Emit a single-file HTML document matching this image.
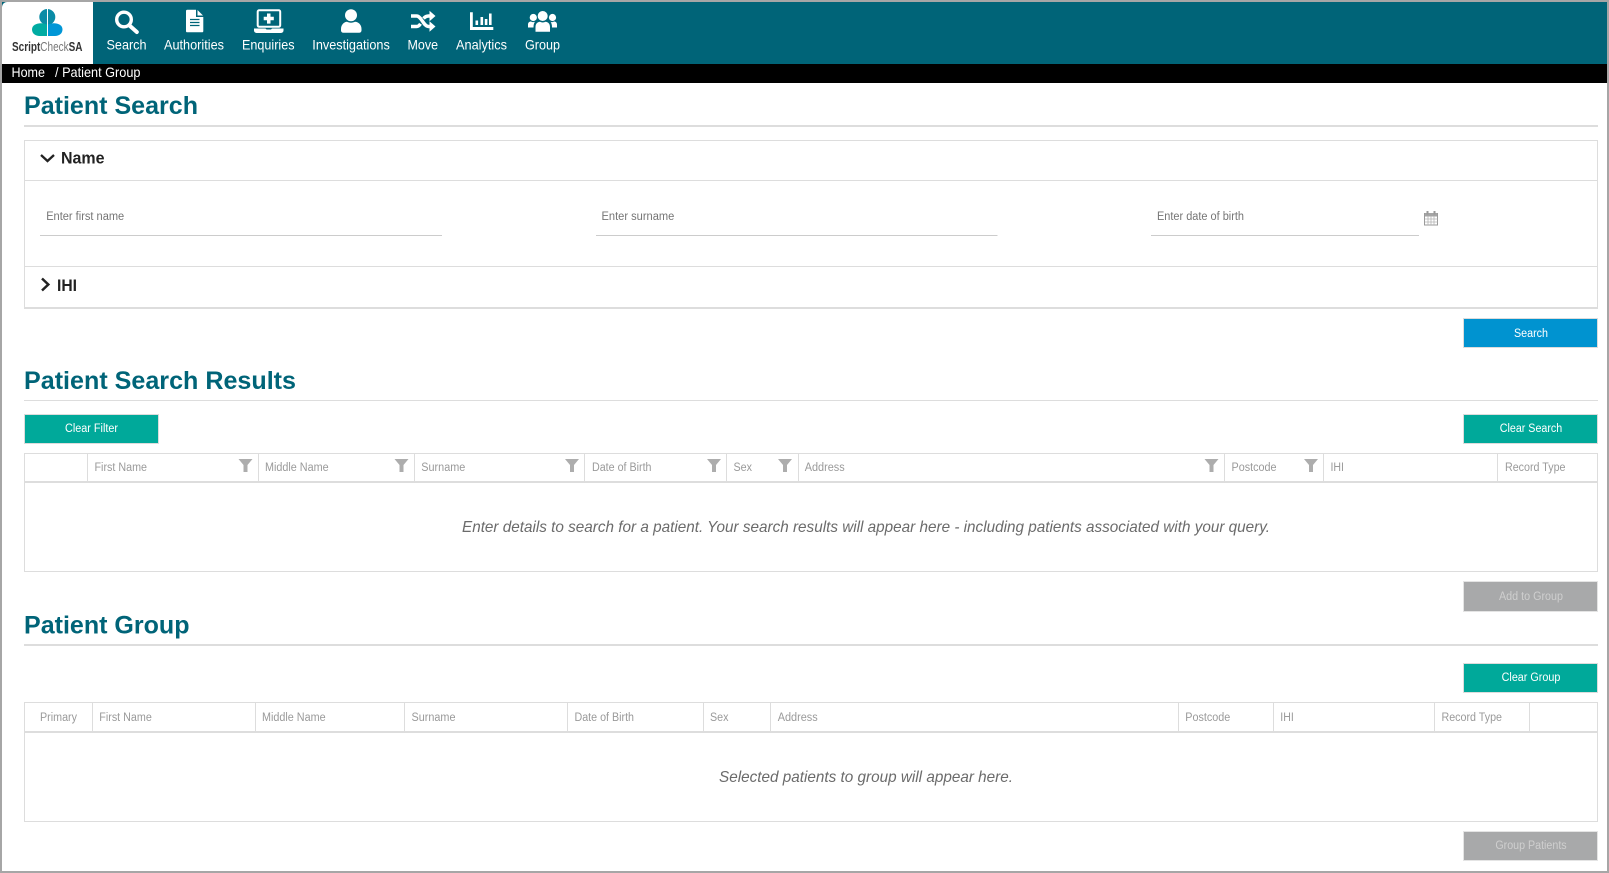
<!DOCTYPE html>
<html lang="en"><head><meta charset="utf-8"><title>Patient Group</title>
<style>
html,body{margin:0;padding:0;background:#fff;width:1609px;height:873px;overflow:hidden}
svg{display:block;position:absolute;left:0;top:0}
text{font-family:"Liberation Sans",Arial,sans-serif}
.n{font-size:14px;fill:#fff}
.h{font-size:25px;font-weight:bold;fill:#006478}
.l{font-size:11.5px;fill:#757575}
.t{font-size:11.5px;fill:#9a9a9a}
.b{font-size:11.5px;fill:#fff;text-anchor:middle}
.d{font-size:11.5px;fill:#cfcfcf;text-anchor:middle}
.e{font-size:16px;font-style:italic;fill:#6b6b6b;text-anchor:middle}
.r{fill:#ddd;shape-rendering:crispEdges}
.f{fill:#adadad}
</style></head><body>
<svg width="1609" height="873" viewBox="0 0 1609 873" xmlns="http://www.w3.org/2000/svg">
<!-- frame -->
<rect x="0" y="0" width="1609" height="873" fill="#fff"/>
<!-- header -->
<rect class="x" x="2" y="2" width="1605" height="62" fill="#006478"/>
<path d="M2 64V7a5 5 0 0 1 5-5H93V64Z" fill="#fff"/>
<rect x="2" y="64" width="1605" height="19" fill="#000"/>
<!-- logo -->
<circle cx="47.300" cy="17" r="8" fill="#0a8ba6"/>
<path d="M47 24.500C42 22 32 23 32 29.500 32 33.500 35.500 36 39.500 36H47Z" fill="#00abA2"/>
<path d="M48 24.500C53 22 62.500 23 62.500 29.500 62.500 33.500 59 36 55 36H48Z" fill="#0096d6"/>
<rect x="47" y="8" width="1" height="28" fill="#fff"/>
<text x="12" y="51" font-size="12.500" fill="#333" textLength="70.500" lengthAdjust="spacingAndGlyphs"><tspan font-weight="bold">Script</tspan><tspan fill="#777">Check</tspan><tspan font-weight="bold">SA</tspan></text>
<!-- nav icons -->
<g fill="none" stroke="#fff">
<circle cx="124" cy="19.500" r="7.300" stroke-width="3.400"/>
<path d="M129.500 25.500L136.800 32" stroke-width="4" stroke-linecap="round"/>
</g>
<path d="M186 11a1.300 1.300 0 0 1 1.300-1.300H196V17h7.300V31a1.300 1.300 0 0 1-1.300 1.300H187.300a1.300 1.300 0 0 1-1.300-1.300Z" fill="#fff"/>
<path d="M197.500 10L203 15.500H197.500Z" fill="#fff"/>
<path d="M190 19.500H199.500M190 22.500H199.500M190 25.500H199.500" stroke="#006478" stroke-width="1.200"/>
<rect x="257.700" y="10.300" width="22.500" height="16.500" rx="1.500" fill="none" stroke="#fff" stroke-width="2"/>
<path d="M267 13.500h3.500v3.300h3.300v3.500h-3.300v3.300H267v-3.300h-3.300v-3.500H267Z" fill="#fff"/>
<path d="M254 28.500H265.500L266.500 29.500H271L272 28.500H283.500V30.500A2.500 2.500 0 0 1 281 33H256.500A2.500 2.500 0 0 1 254 30.500Z" fill="#fff"/>
<circle cx="351" cy="15.300" r="6" fill="#fff"/>
<path d="M341 29C341 24.500 344.500 21.800 347 21.800 349 23 353 23 355 21.800 358 21.800 361.500 24.500 361.500 29V30.500A2.300 2.300 0 0 1 359.200 32.800H343.300A2.300 2.300 0 0 1 341 30.500Z" fill="#fff"/>
<g fill="none" stroke="#fff" stroke-width="3.400">
<path d="M411 16H416.500C421.500 16 423.500 26.500 428.500 26.500H431"/>
<path d="M411 26.500H416.500C418 26.500 419.500 25.300 420.500 23.800M423.500 18.500C424.800 17 426.300 16 428.500 16H431"/>
</g>
<path d="M429.500 10.800L435.500 16L429.500 21.200ZM429.500 21.300L435.500 26.500L429.500 31.700Z" fill="#fff"/>
<path d="M470 12.300H472.800V27H493.300V30H470Z" fill="#fff"/>
<rect x="475.500" y="20.500" width="2.600" height="4.500" fill="#fff"/>
<rect x="480.500" y="17" width="2.600" height="8" fill="#fff"/>
<rect x="484.800" y="19" width="2.600" height="6" fill="#fff"/>
<rect x="489" y="13.500" width="2.600" height="11.500" fill="#fff"/>
<circle cx="542.700" cy="16" r="5" fill="#fff"/>
<circle cx="533.300" cy="17.500" r="3.600" fill="#fff"/>
<circle cx="552.500" cy="17.500" r="3.600" fill="#fff"/>
<path d="M535.500 31.700V27C535.500 23.500 538 21.800 540 21.800 541.500 22.700 544 22.700 545.500 21.800 547.500 21.800 550 23.500 550 27V31.700Z" fill="#fff"/>
<path d="M528 27.500V24.500C528 22.500 529.500 21.500 531 21.500 532 22.300 534 22.300 535 21.800 534 23 533.500 25 533.500 27.500Z" fill="#fff"/>
<path d="M557 27.500V24.500C557 22.500 555.500 21.500 554 21.500 553 22.300 551 22.300 550.500 21.800 551.500 23 552 25 552 27.500Z" fill="#fff"/>
<!-- nav labels -->
<text class="n" x="106.500" y="49.500" textLength="40" lengthAdjust="spacingAndGlyphs">Search</text>
<text class="n" x="164" y="49.500" textLength="60" lengthAdjust="spacingAndGlyphs">Authorities</text>
<text class="n" x="242" y="49.500" textLength="52.500" lengthAdjust="spacingAndGlyphs">Enquiries</text>
<text class="n" x="312.300" y="49.500" textLength="77.500" lengthAdjust="spacingAndGlyphs">Investigations</text>
<text class="n" x="407.500" y="49.500" textLength="30.500" lengthAdjust="spacingAndGlyphs">Move</text>
<text class="n" x="456" y="49.500" textLength="51" lengthAdjust="spacingAndGlyphs">Analytics</text>
<text class="n" x="525" y="49.500" textLength="35" lengthAdjust="spacingAndGlyphs">Group</text>
<text class="n" x="11.500" y="77" textLength="33.500" lengthAdjust="spacingAndGlyphs">Home</text>
<text class="n" x="55" y="77" textLength="85.500" lengthAdjust="spacingAndGlyphs">/ Patient Group</text>
<!-- Patient search -->
<text class="h" x="24" y="114" textLength="174" lengthAdjust="spacingAndGlyphs">Patient Search</text>
<rect class="r" x="24" y="125" width="1574" height="2"/>
<rect class="r" x="24" y="140" width="1574" height="1"/>
<rect class="r" x="24" y="140" width="1" height="169"/>
<rect class="r" x="1597" y="140" width="1" height="169"/>
<rect class="r" x="24" y="180" width="1574" height="1"/>
<rect class="r" x="24" y="266" width="1574" height="1"/>
<rect class="r" x="24" y="307" width="1574" height="2"/>
<path d="M41 155L47.500 161L54 155" fill="none" stroke="#222" stroke-width="2.300"/>
<text x="61" y="163.300" font-size="17" font-weight="bold" fill="#222" textLength="43.500" lengthAdjust="spacingAndGlyphs">Name</text>
<path d="M42 278.500L48.300 284.500L42 290.500" fill="none" stroke="#222" stroke-width="2.500"/>
<text x="57" y="291" font-size="17" font-weight="bold" fill="#222" textLength="20" lengthAdjust="spacingAndGlyphs">IHI</text>
<text class="l" x="46.200" y="220" textLength="78" lengthAdjust="spacingAndGlyphs">Enter first name</text>
<rect x="40" y="235" width="402" height="1" fill="#ccc"/>
<text class="l" x="601.500" y="220" textLength="72.800" lengthAdjust="spacingAndGlyphs">Enter surname</text>
<rect x="596" y="235" width="401.500" height="1" fill="#ccc"/>
<text class="l" x="1157" y="220" textLength="87" lengthAdjust="spacingAndGlyphs">Enter date of birth</text>
<rect x="1151" y="235" width="268" height="1" fill="#ccc"/>
<!-- calendar icon -->
<path d="M1424.500 213.500h13v11.500h-13Z" fill="none" stroke="#9a9a9a" stroke-width="1"/>
<path d="M1425 213h12v3.500h-12Z" fill="#a5a5a5"/>
<path d="M1427.500 211v3.500M1434.500 211v3.500" stroke="#999" stroke-width="2"/>
<path d="M1425 219h12.500M1425 222h12.500M1428 216v9M1431 216v9M1434 216v9" stroke="#b5b5b5" stroke-width=".8"/>
<rect x="1463.500" y="318.500" width="134" height="29" fill="#0093d0" stroke="#dcdcdc"/>
<text class="b" x="1531" y="337" textLength="34" lengthAdjust="spacingAndGlyphs">Search</text>
<!-- Results -->
<text class="h" x="24" y="389" textLength="272" lengthAdjust="spacingAndGlyphs">Patient Search Results</text>
<rect class="r" x="24" y="400" width="1574" height="1"/>
<rect x="24.500" y="414.500" width="134" height="29" fill="#00a99a" stroke="#dcdcdc"/>
<text class="b" x="91.500" y="432" textLength="53" lengthAdjust="spacingAndGlyphs">Clear Filter</text>
<rect x="1463.500" y="414.500" width="134" height="29" fill="#00a99a" stroke="#dcdcdc"/>
<text class="b" x="1531" y="432" textLength="62.500" lengthAdjust="spacingAndGlyphs">Clear Search</text>
<rect class="r" x="24" y="453" width="1574" height="1"/>
<rect class="r" x="24" y="481" width="1574" height="2"/>
<rect class="r" x="24" y="571" width="1574" height="1"/>
<rect class="r" x="24" y="453" width="1" height="119"/>
<rect class="r" x="1597" y="453" width="1" height="119"/>
<rect class="r" x="87" y="453" width="1" height="28"/>
<rect class="r" x="258" y="453" width="1" height="28"/>
<rect class="r" x="414" y="453" width="1" height="28"/>
<rect class="r" x="584" y="453" width="1" height="28"/>
<rect class="r" x="726" y="453" width="1" height="28"/>
<rect class="r" x="798" y="453" width="1" height="28"/>
<rect class="r" x="1224" y="453" width="1" height="28"/>
<rect class="r" x="1323" y="453" width="1" height="28"/>
<rect class="r" x="1497" y="453" width="1" height="28"/>
<text class="t" x="94.500" y="471" textLength="52.500" lengthAdjust="spacingAndGlyphs">First Name</text>
<text class="t" x="265" y="471" textLength="63.600" lengthAdjust="spacingAndGlyphs">Middle Name</text>
<text class="t" x="421.300" y="471" textLength="44" lengthAdjust="spacingAndGlyphs">Surname</text>
<text class="t" x="592" y="471" textLength="59.500" lengthAdjust="spacingAndGlyphs">Date of Birth</text>
<text class="t" x="733.500" y="471" textLength="18.500" lengthAdjust="spacingAndGlyphs">Sex</text>
<text class="t" x="804.700" y="471" textLength="40" lengthAdjust="spacingAndGlyphs">Address</text>
<text class="t" x="1231.500" y="471" textLength="45" lengthAdjust="spacingAndGlyphs">Postcode</text>
<text class="t" x="1330.500" y="471" textLength="13.500" lengthAdjust="spacingAndGlyphs">IHI</text>
<text class="t" x="1505" y="471" textLength="60.500" lengthAdjust="spacingAndGlyphs">Record Type</text>
<path class="f" d="M238.500 459H252.500L247.500 465V472H243.500V465Z"/>
<path class="f" d="M394.500 459H408.500L403.500 465V472H399.500V465Z"/>
<path class="f" d="M565 459H579L574 465V472H570V465Z"/>
<path class="f" d="M707 459H721L716 465V472H712V465Z"/>
<path class="f" d="M778 459H792L787 465V472H783V465Z"/>
<path class="f" d="M1204.500 459H1218.500L1213.500 465V472H1209.500V465Z"/>
<path class="f" d="M1304 459H1318L1313 465V472H1309V465Z"/>
<text class="e" x="866" y="532" textLength="808" lengthAdjust="spacingAndGlyphs">Enter details to search for a patient. Your search results will appear here - including patients associated with your query.</text>
<rect x="1463.500" y="581.500" width="134" height="30" fill="#a8a9aa" stroke="#e4e4e4"/>
<text class="d" x="1531" y="600" textLength="64" lengthAdjust="spacingAndGlyphs">Add to Group</text>
<!-- Group -->
<text class="h" x="24" y="633.500" textLength="165.500" lengthAdjust="spacingAndGlyphs">Patient Group</text>
<rect class="r" x="24" y="644" width="1574" height="2"/>
<rect x="1463.500" y="663.500" width="134" height="29" fill="#00a99a" stroke="#dcdcdc"/>
<text class="b" x="1531" y="681" textLength="58.700" lengthAdjust="spacingAndGlyphs">Clear Group</text>
<rect class="r" x="24" y="702" width="1574" height="1"/>
<rect class="r" x="24" y="731" width="1574" height="2"/>
<rect class="r" x="24" y="821" width="1574" height="1"/>
<rect class="r" x="24" y="702" width="1" height="120"/>
<rect class="r" x="1597" y="702" width="1" height="120"/>
<rect class="r" x="92" y="702" width="1" height="29"/>
<rect class="r" x="255" y="702" width="1" height="29"/>
<rect class="r" x="404" y="702" width="1" height="29"/>
<rect class="r" x="567" y="702" width="1" height="29"/>
<rect class="r" x="703" y="702" width="1" height="29"/>
<rect class="r" x="770" y="702" width="1" height="29"/>
<rect class="r" x="1178" y="702" width="1" height="29"/>
<rect class="r" x="1273" y="702" width="1" height="29"/>
<rect class="r" x="1434" y="702" width="1" height="29"/>
<rect class="r" x="1529" y="702" width="1" height="29"/>
<text class="t" x="40" y="721" textLength="37" lengthAdjust="spacingAndGlyphs">Primary</text>
<text class="t" x="99.300" y="721" textLength="52.500" lengthAdjust="spacingAndGlyphs">First Name</text>
<text class="t" x="262" y="721" textLength="63.600" lengthAdjust="spacingAndGlyphs">Middle Name</text>
<text class="t" x="411.500" y="721" textLength="44" lengthAdjust="spacingAndGlyphs">Surname</text>
<text class="t" x="574.500" y="721" textLength="59.500" lengthAdjust="spacingAndGlyphs">Date of Birth</text>
<text class="t" x="710" y="721" textLength="18.500" lengthAdjust="spacingAndGlyphs">Sex</text>
<text class="t" x="777.700" y="721" textLength="40" lengthAdjust="spacingAndGlyphs">Address</text>
<text class="t" x="1185.300" y="721" textLength="45" lengthAdjust="spacingAndGlyphs">Postcode</text>
<text class="t" x="1280.300" y="721" textLength="13.500" lengthAdjust="spacingAndGlyphs">IHI</text>
<text class="t" x="1441.500" y="721" textLength="60.500" lengthAdjust="spacingAndGlyphs">Record Type</text>
<text class="e" x="866" y="782" textLength="294" lengthAdjust="spacingAndGlyphs">Selected patients to group will appear here.</text>
<rect x="1463.500" y="831.500" width="134" height="29" fill="#a8a9aa" stroke="#e4e4e4"/>
<text class="d" x="1531" y="849" textLength="71.300" lengthAdjust="spacingAndGlyphs">Group Patients</text>
<!-- outer frame -->
<rect x="0" y="0" width="1609" height="2" fill="#a6a6a6"/>
<rect x="0" y="871" width="1609" height="2" fill="#a6a6a6"/>
<rect x="0" y="0" width="2" height="873" fill="#a6a6a6"/>
<rect x="1607" y="0" width="2" height="873" fill="#a6a6a6"/>
</svg>
</body></html>
